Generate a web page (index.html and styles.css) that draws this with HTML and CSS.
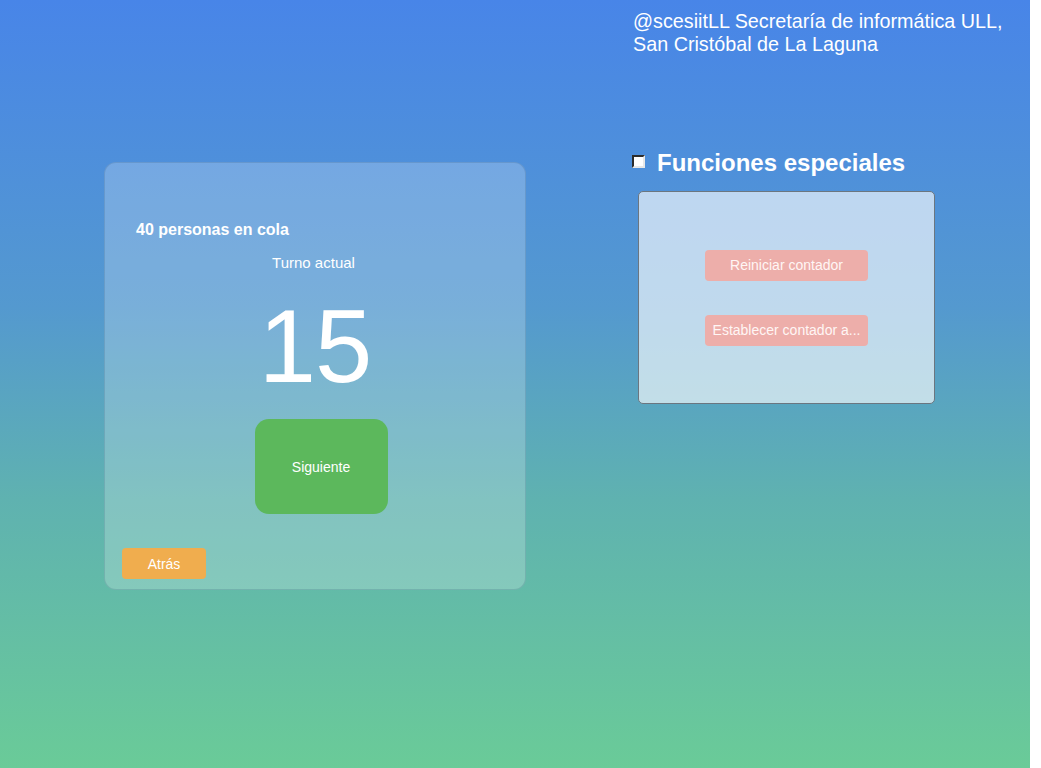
FILE: index.html
```html
<!DOCTYPE html>
<html lang="es">
<head>
<meta charset="utf-8">
<title>Turnos</title>
<link rel="stylesheet" href="styles.css">
</head>
<body>
<div class="page">
  <section class="left">
    <div class="card">
      <div class="queue">40 personas en cola</div>
      <div class="turn-label">Turno actual</div>
      <div class="turn-number">15</div>
      <button class="btn-next">Siguiente</button>
      <div class="card-footer">
        <button class="btn-back">Atrás</button>
      </div>
    </div>
  </section>
  <section class="right">
    <div class="header-text">@scesiitLL Secretaría de informática ULL,<br>San Cristóbal de La Laguna</div>
    <label class="special-title"><span class="checkbox"></span><span>Funciones especiales</span></label>
    <div class="special-panel">
      <button class="btn-special">Reiniciar contador</button>
      <button class="btn-special">Establecer contador a...</button>
    </div>
  </section>
</div>
</body>
</html>
```

FILE: styles.css
```css
html, body {
  margin: 0;
  padding: 0;
  background: #ffffff;
}
body {
  font-family: "Liberation Sans", Arial, sans-serif;
  color: #ffffff;
}
.page {
  width: 1030px;
  height: 768px;
  background: linear-gradient(to bottom, #4885e8 0%, #5499cf 40%, #5fb2b0 65%, #6acb98 100%);
  display: grid;
  grid-template-columns: 633px 1fr;
}
.left {
  padding: 162px 0 0 104px;
}
.card {
  box-sizing: border-box;
  width: 422px;
  height: 428px;
  border: 1px solid rgba(40, 80, 110, 0.18);
  border-radius: 12px;
  background: rgba(255, 255, 255, 0.22);
  display: flex;
  flex-direction: column;
  align-items: center;
  padding-top: 58px;
}
.queue {
  align-self: flex-start;
  margin-left: 31px;
  font-size: 16px;
  font-weight: bold;
  line-height: 18px;
}
.turn-label {
  margin-top: 15px;
  margin-right: 3px;
  font-size: 15px;
  line-height: 17px;
}
.turn-number {
  margin-top: 24px;
  font-size: 103px;
  line-height: 103px;
  letter-spacing: -1px;
  height: 103px;
}
.btn-next {
  margin-top: 21px;
  width: 133px;
  height: 95px;
  border: none;
  border-radius: 14px;
  background: #5cb85c;
  color: #ffffff;
  font-family: "Liberation Sans", Arial, sans-serif;
  font-size: 14px;
  padding: 0;
  margin-left: 12px;
}
.card-footer {
  align-self: stretch;
  margin-top: 34px;
  padding-left: 17px;
}
.btn-back {
  width: 84px;
  height: 31px;
  border: none;
  border-radius: 4px;
  background: #f0ad4e;
  color: #ffffff;
  font-family: "Liberation Sans", Arial, sans-serif;
  font-size: 14px;
  padding: 0;
}
.right {
  padding-top: 10px;
}
.header-text {
  font-size: 19.75px;
  line-height: 23px;
}
.special-title {
  display: flex;
  align-items: center;
  margin-top: 93px;
  font-size: 24px;
  font-weight: bold;
  line-height: 28px;
}
.checkbox {
  box-sizing: border-box;
  width: 13px;
  height: 13px;
  border: 2px inset #d4d0c8;
  border-top-color: #808080;
  border-left-color: #808080;
  border-right-color: #e8e8e8;
  border-bottom-color: #e8e8e8;
  background: #ffffff;
  margin-left: -1px;
  margin-right: 12px;
  margin-top: -3px;
}
.special-panel {
  box-sizing: border-box;
  width: 297px;
  height: 213px;
  margin-top: 14px;
  margin-left: 5px;
  border: 1px solid #6b7680;
  border-radius: 5px;
  background: rgba(255, 255, 255, 0.63);
  display: flex;
  flex-direction: column;
  align-items: center;
  justify-content: center;
  gap: 34px;
}
.btn-special {
  width: 163px;
  height: 31px;
  border: none;
  border-radius: 4px;
  background: #edaeaa;
  color: #fff6f5;
  font-family: "Liberation Sans", Arial, sans-serif;
  font-size: 14px;
  padding: 0 2px;
  white-space: nowrap;
  overflow: hidden;
  text-overflow: ellipsis;
}
```
